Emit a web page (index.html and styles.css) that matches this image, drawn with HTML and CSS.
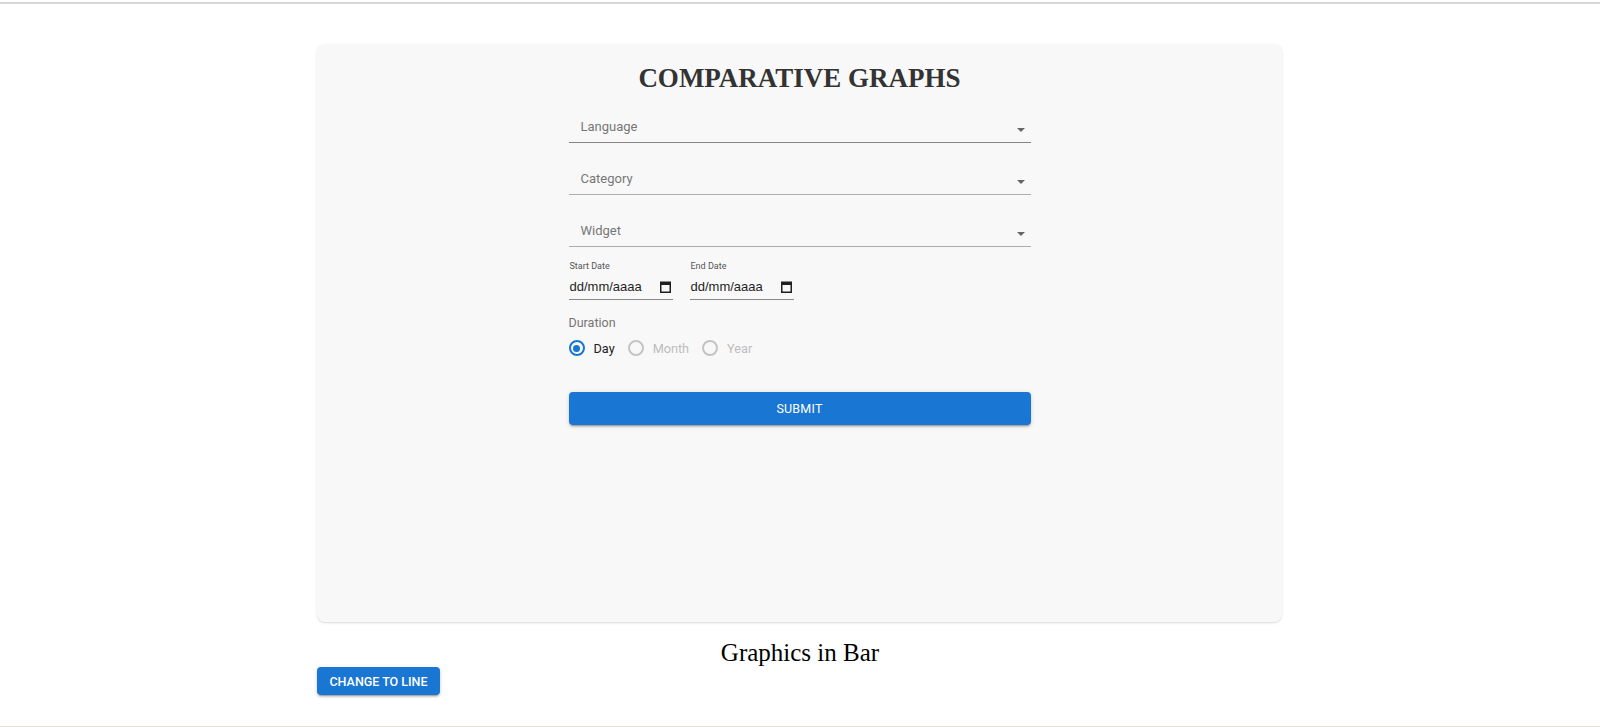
FILE: index.html
```html
<!DOCTYPE html>
<html lang="en">
<head>
<meta charset="utf-8">
<title>Comparative Graphs</title>
<link rel="stylesheet" href="styles.css">
</head>
<body>
<div class="topline"></div>
<main class="page">
  <section class="card">
    <h1 class="title">COMPARATIVE GRAPHS</h1>
    <form class="form">
      <div class="field field-first"><span class="field-label">Language</span><span class="caret"></span></div>
      <div class="field"><span class="field-label">Category</span><span class="caret"></span></div>
      <div class="field"><span class="field-label">Widget</span><span class="caret"></span></div>
      <div class="dates">
        <div class="date">
          <span class="date-label">Start Date</span>
          <div class="date-input"><span>dd/mm/aaaa</span>
            <svg class="cal" width="11" height="12" viewBox="0 0 11 12"><path d="M0 0.5h11v11.5H0z M1.5 4v6.5h8V4z" fill="#1f1f1f" fill-rule="evenodd"/></svg>
          </div>
        </div>
        <div class="date">
          <span class="date-label">End Date</span>
          <div class="date-input"><span>dd/mm/aaaa</span>
            <svg class="cal" width="11" height="12" viewBox="0 0 11 12"><path d="M0 0.5h11v11.5H0z M1.5 4v6.5h8V4z" fill="#1f1f1f" fill-rule="evenodd"/></svg>
          </div>
        </div>
      </div>
      <div class="duration-label">Duration</div>
      <div class="radios">
        <span class="radio-item active"><span class="radio checked"></span>Day</span>
        <span class="radio-item"><span class="radio"></span>Month</span>
        <span class="radio-item"><span class="radio"></span>Year</span>
      </div>
      <button type="button" class="submit">SUBMIT</button>
    </form>
  </section>
  <h2 class="caption">Graphics in Bar</h2>
  <button type="button" class="change-btn">CHANGE TO LINE</button>
</main>
</body>
</html>
```
FILE: styles.css
```css
html, body {
  margin: 0;
  padding: 0;
  background: #ffffff;
}
body {
  min-height: 100vh;
  box-sizing: border-box;
  border-bottom: 1px solid #e6e2da;
  font-family: Roboto, "Liberation Sans", sans-serif;
}
.topline {
  margin-top: 2px;
  height: 2px;
  background: #d6d6d6;
}
.page {
  width: 966px;
  margin: 0 auto;
}
.card {
  margin: 40px 1px 0 0;
  height: 578px;
  box-sizing: border-box;
  padding-top: 18px;
  background: #f8f8f8;
  border-radius: 8px;
  box-shadow: 0 1px 3px rgba(0, 0, 0, 0.10), 0 1px 1px rgba(0, 0, 0, 0.05);
}
.title {
  margin: 0;
  text-align: center;
  font-family: "Liberation Serif", "Times New Roman", serif;
  font-weight: bold;
  font-size: 27px;
  line-height: 32px;
  color: #333333;
}
.form {
  width: 462px;
  margin: 9px auto 0;
  display: flex;
  flex-direction: column;
}
.field {
  height: 40px;
  box-sizing: border-box;
  border-bottom: 1px solid #adadad;
  display: flex;
  align-items: flex-end;
  justify-content: space-between;
  padding: 0 6px 7px 12px;
}
.field + .field {
  margin-top: 12px;
}
.field-first {
  border-bottom-color: #858585;
}
.field-label {
  font-size: 13px;
  line-height: 16px;
  color: #777777;
}
.caret {
  width: 0;
  height: 0;
  border-left: 4px solid transparent;
  border-right: 4px solid transparent;
  border-top: 4px solid #666666;
  margin-bottom: 3px;
}
.dates {
  display: flex;
  gap: 17px;
  margin-top: 14px;
}
.date {
  width: 104px;
}
.date-label {
  display: block;
  padding-left: 1px;
  font-size: 9px;
  line-height: 11px;
  color: #555555;
}
.date-input {
  height: 28px;
  box-sizing: border-box;
  border-bottom: 1px solid #8a8a8a;
  display: flex;
  align-items: center;
  justify-content: space-between;
  padding: 2px 2px 0 1px;
  font-family: "Liberation Sans", Arial, sans-serif;
  font-size: 13px;
  color: #1f1f1f;
}
.duration-label {
  margin-top: 15px;
  font-size: 12.5px;
  line-height: 16px;
  color: #757575;
}
.radios {
  display: flex;
  align-items: center;
  height: 24px;
  margin-top: 5px;
}
.radio-item {
  display: flex;
  align-items: center;
  gap: 9px;
  margin-right: 13px;
  font-size: 12.7px;
  color: #bdbdbd;
}
.radio-item.active {
  color: #222222;
}
.radio {
  width: 16px;
  height: 16px;
  box-sizing: border-box;
  border-radius: 50%;
  border: 2px solid #c4c4c4;
  display: flex;
  align-items: center;
  justify-content: center;
}
.radio.checked {
  border-color: #1976d2;
}
.radio.checked::after {
  content: "";
  width: 7px;
  height: 7px;
  border-radius: 50%;
  background: #1976d2;
}
.submit {
  margin-top: 32px;
  height: 33px;
  width: 100%;
  border: 0;
  border-radius: 4px;
  background: #1976d2;
  color: #ffffff;
  font-family: Roboto, sans-serif;
  font-size: 12.5px;
  font-weight: 400;
  letter-spacing: 0.2px;
  box-shadow: 0 3px 1px -2px rgba(0, 0, 0, 0.2), 0 2px 2px 0 rgba(0, 0, 0, 0.14), 0 1px 5px 0 rgba(0, 0, 0, 0.12);
}
.caption {
  margin: 16px 0 0;
  text-align: center;
  font-family: "Liberation Serif", "Times New Roman", serif;
  font-weight: normal;
  font-size: 25px;
  line-height: 29px;
  color: #000000;
}
.change-btn {
  display: block;
  width: 123px;
  height: 28px;
  padding: 0;
  border: 0;
  border-radius: 4px;
  background: #1976d2;
  color: #ffffff;
  font-family: Roboto, sans-serif;
  font-size: 12.5px;
  font-weight: 500;
  letter-spacing: 0;
  box-shadow: 0 3px 1px -2px rgba(0, 0, 0, 0.2), 0 2px 2px 0 rgba(0, 0, 0, 0.14), 0 1px 5px 0 rgba(0, 0, 0, 0.12);
}
```
